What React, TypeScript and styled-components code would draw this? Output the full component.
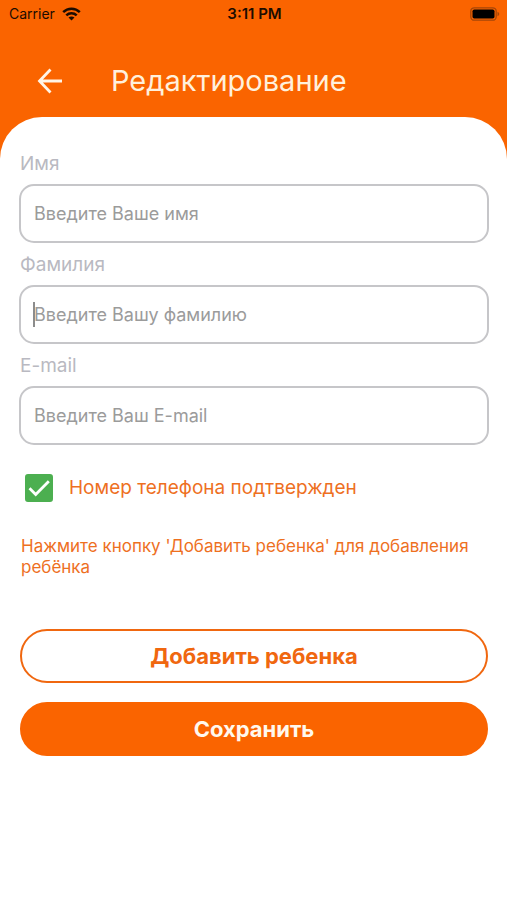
import React, { useState } from "react";
import styled, { createGlobalStyle } from "styled-components";

const orange = "#fa6400";

const GlobalStyle = createGlobalStyle`
  * {
    box-sizing: border-box;
  }

  body {
    margin: 0;
    background: ${orange};
    font-family: Inter, "Noto Sans", sans-serif;
  }
`;

const Screen = styled.div`
  display: flex;
  flex-direction: column;
  min-height: 100vh;
  background: ${orange};
`;

const StatusBar = styled.div`
  display: grid;
  grid-template-columns: 1fr auto 1fr;
  align-items: center;
  height: 28px;
  padding: 0 7px 0 9px;
  color: #1c0c00;
  font-size: 14px;
  line-height: 20px;
`;

const Carrier = styled.span`
  display: flex;
  align-items: center;
  gap: 7px;
`;

const Clock = styled.time`
  font-size: 15px;
  font-weight: 600;
`;

const Battery = styled.svg`
  justify-self: end;
`;

const Header = styled.header`
  display: flex;
  align-items: center;
  gap: 43px;
  height: 89px;
  padding: 16px 32px 0;
`;

const BackButton = styled.button`
  display: flex;
  padding: 0;
  border: 0;
  background: none;
  color: #fff4e6;
  cursor: pointer;
`;

const Title = styled.h1`
  margin: 0;
  color: #fff0dc;
  font-size: 29px;
  font-weight: 400;
  line-height: 36px;
`;

const Sheet = styled.form`
  display: flex;
  flex: 1;
  flex-direction: column;
  padding: 30px 18px 40px 19px;
  border-radius: 42px 42px 0 0;
  background: #fff;
`;

const Field = styled.div`
  display: flex;
  flex-direction: column;
  margin-bottom: 5px;
`;

const Label = styled.label`
  margin-bottom: 5px;
  padding-top: 1px;
  padding-left: 1px;
  color: #b9b9c1;
  font-size: 19px;
  line-height: 31px;
`;

const InputWrap = styled.div`
  position: relative;
`;

const Input = styled.input`
  display: block;
  width: 100%;
  height: 59px;
  padding: 0 13px;
  border: 2px solid #c6c6c9;
  border-radius: 15px;
  outline: 0;
  background: #fff;
  color: #444;
  font: 400 18px/24px Inter, "Noto Sans", sans-serif;

  &::placeholder {
    color: #9b9b9b;
    opacity: 1;
  }
`;

const Caret = styled.span`
  position: absolute;
  top: 17px;
  left: 14px;
  width: 2px;
  height: 25px;
  background: #8c8c8c;
`;

const Confirmation = styled.label`
  display: flex;
  align-items: center;
  gap: 16px;
  margin-top: 24px;
  padding-left: 6px;
  color: #ee701f;
  font-size: 19px;
  line-height: 28px;
`;

const CheckControl = styled.span`
  display: grid;
  width: 28px;
  height: 28px;

  > * {
    grid-area: 1 / 1;
  }
`;

const Checkbox = styled.input`
  width: 28px;
  height: 28px;
  margin: 0;
  border: 2px solid #4caf50;
  border-radius: 3px;
  appearance: none;
  cursor: pointer;

  &:checked {
    background: #4caf50;
  }

  &:not(:checked) + svg {
    visibility: hidden;
  }
`;

const CheckMark = styled.svg`
  pointer-events: none;
`;

const Hint = styled.p`
  margin: 34px 0 51px;
  padding: 0 0 0 2px;
  color: #ee701f;
  font-size: 17px;
  line-height: 21px;
`;

const Actions = styled.div`
  display: flex;
  flex-direction: column;
  gap: 19px;
  padding: 0 1px;
`;

const ActionButton = styled.button<{ $filled?: boolean }>`
  height: 54px;
  border: 2px solid ${({ $filled }) => ($filled ? orange : "#f0670f")};
  border-radius: 27px;
  background: ${({ $filled }) => ($filled ? orange : "#fff")};
  color: ${({ $filled }) => ($filled ? "#fff8ee" : "#f0670f")};
  font: 700 22px/28px Inter, "Noto Sans", sans-serif;
  cursor: pointer;
`;

const fields = [
  { id: "first-name", label: "Имя", placeholder: "Введите Ваше имя", type: "text" },
  { id: "last-name", label: "Фамилия", placeholder: "Введите Вашу фамилию", type: "text", active: true },
  { id: "email", label: "E-mail", placeholder: "Введите Ваш E-mail", type: "email" },
];

export default function App() {
  const [values, setValues] = useState<Record<string, string>>({});
  const [confirmed, setConfirmed] = useState(true);

  return (
    <Screen>
      <GlobalStyle />
      <StatusBar>
        <Carrier>
          Carrier
          <svg width="19" height="14" viewBox="0 0 19 14" aria-hidden="true">
            <g fill="none" stroke="#1c0c00" strokeWidth="2.5">
              <path d="M1.2 5.2C5.8 0.6 13.2 0.6 17.8 5.2" />
              <path d="M4.3 8.4C7.2 5.6 11.8 5.6 14.7 8.4" />
            </g>
            <path d="M9.5 13.6 6.5 10.6C8.2 9.1 10.8 9.1 12.5 10.6Z" fill="#1c0c00" />
          </svg>
        </Carrier>
        <Clock>3:11 PM</Clock>
        <Battery width="30" height="14" viewBox="0 0 30 14" aria-label="Battery full">
          <rect x="0.8" y="0.8" width="25.4" height="12.4" rx="3.5" fill="none" stroke="#a54608" strokeWidth="1.3" />
          <rect x="2.5" y="2.5" width="22" height="9" rx="1.8" fill="#000" />
          <path d="M27.5 4.8C29.8 5.8 29.8 8.2 27.5 9.2Z" fill="#a54608" />
        </Battery>
      </StatusBar>
      <Header>
        <BackButton type="button" aria-label="Назад">
          <svg width="36" height="36" viewBox="0 0 36 36" fill="none" stroke="currentColor" strokeWidth="2.8">
            <path d="M30 18H8M18.5 6.5 7.5 18l11 11.5" />
          </svg>
        </BackButton>
        <Title>Редактирование</Title>
      </Header>
      <Sheet onSubmit={(event) => event.preventDefault()}>
        {fields.map(({ id, label, placeholder, type, active }) => (
          <Field key={id}>
            <Label htmlFor={id}>{label}</Label>
            <InputWrap>
              <Input
                id={id}
                type={type}
                placeholder={placeholder}
                value={values[id] ?? ""}
                onChange={(event) => setValues({ ...values, [id]: event.target.value })}
              />
              {active && !values[id] && <Caret />}
            </InputWrap>
          </Field>
        ))}
        <Confirmation>
          <CheckControl>
            <Checkbox
              type="checkbox"
              checked={confirmed}
              onChange={(event) => setConfirmed(event.target.checked)}
            />
            <CheckMark width="28" height="28" viewBox="0 0 28 28" fill="none" stroke="#fff" strokeWidth="2.8">
              <path d="M4.5 14.2 10.7 20.4 23.8 7.3" />
            </CheckMark>
          </CheckControl>
          Номер телефона подтвержден
        </Confirmation>
        <Hint>Нажмите кнопку 'Добавить ребенка' для добавления ребёнка</Hint>
        <Actions>
          <ActionButton type="button">Добавить ребенка</ActionButton>
          <ActionButton type="submit" $filled>
            Сохранить
          </ActionButton>
        </Actions>
      </Sheet>
    </Screen>
  );
}
